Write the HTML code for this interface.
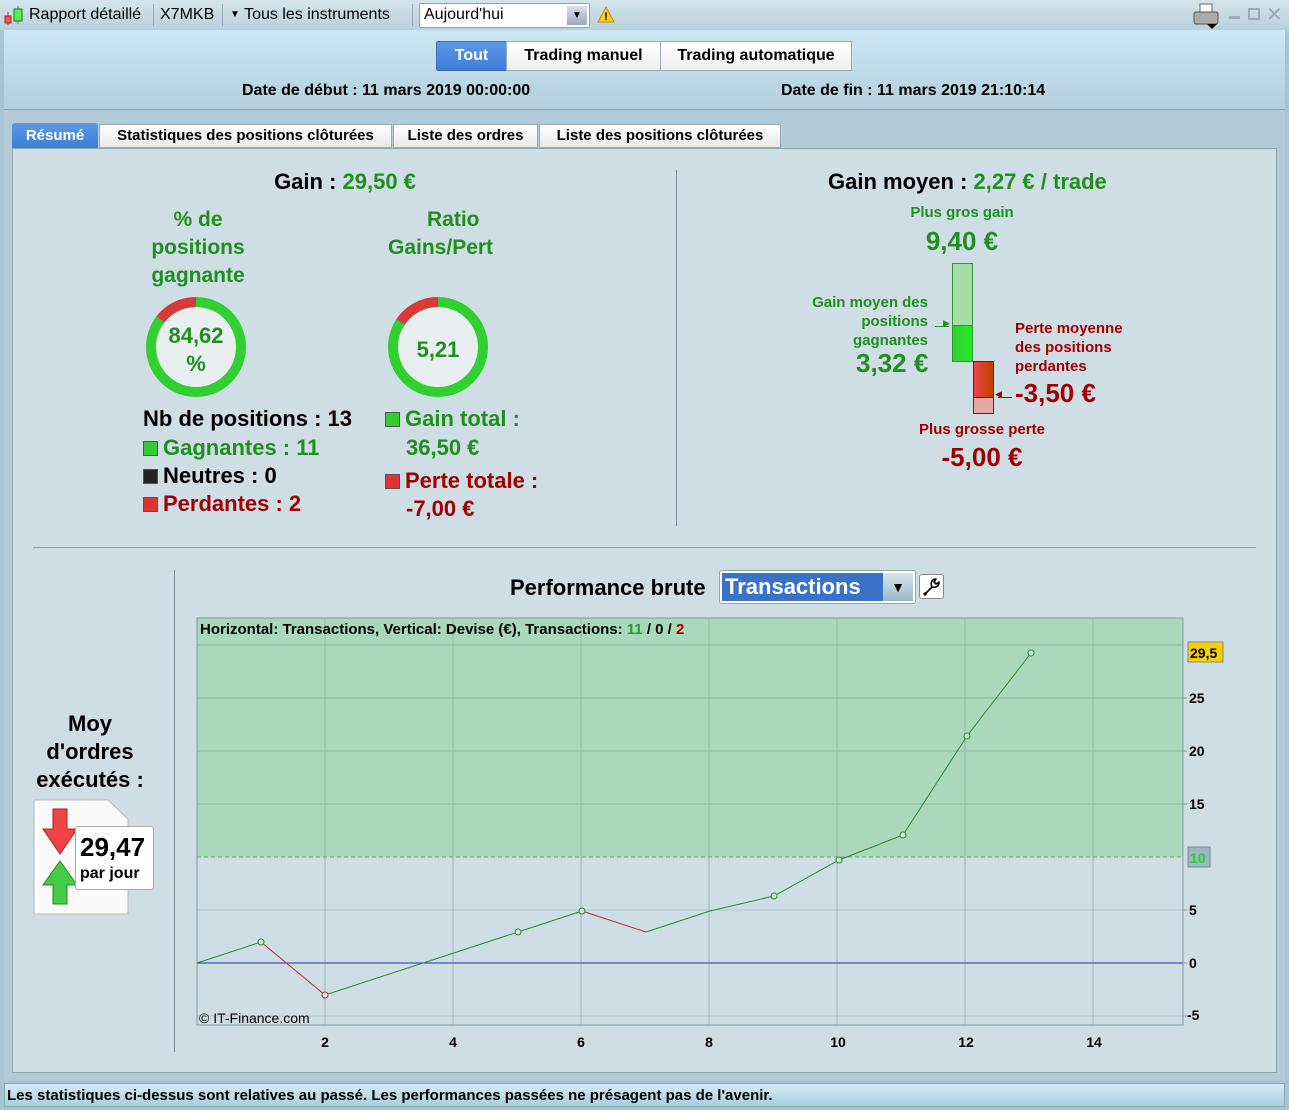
<!DOCTYPE html>
<html><head><meta charset="utf-8">
<style>
*{margin:0;padding:0;box-sizing:border-box}
body{width:1289px;height:1110px;position:relative;overflow:hidden;background:#a8c4d2;font-family:"Liberation Sans",Arial,sans-serif;color:#000}
.a{position:absolute;white-space:nowrap}
.b{font-weight:bold}
.g{color:#1f8f1f}
.r{color:#a00000}
.c{text-align:center}
.sq{display:inline-block;width:15px;height:15px;border:1px solid #555;vertical-align:-1px;margin-right:5px}
</style></head><body>
<div class="a" style="left:0;top:0;width:1289px;height:30px;background:linear-gradient(#d4e4ec,#b8d0dc)"></div>
<svg class="a" style="left:3px;top:6px" width="24" height="20"><line x1="5" y1="6" x2="5" y2="19" stroke="#c33"/><rect x="2" y="10" width="6" height="7" fill="#e55" stroke="#a22"/><line x1="15" y1="0" x2="15" y2="18" stroke="#2a2"/><rect x="11" y="3" width="8" height="12" fill="#5e5" stroke="#272"/></svg>
<div class="a" style="left:29px;top:6px;font-size:16px">Rapport détaillé</div>
<div class="a" style="left:153px;top:4px;width:1px;height:22px;background:#9ab"></div>
<div class="a" style="left:160px;top:6px;font-size:16px">X7MKB</div>
<div class="a" style="left:222px;top:4px;width:1px;height:22px;background:#9ab"></div>
<div class="a" style="left:230px;top:6px;font-size:16px"><span style="font-size:10px;vertical-align:2px">▼</span> Tous les instruments</div>
<div class="a" style="left:412px;top:4px;width:1px;height:22px;background:#9ab"></div>
<div class="a" style="left:419px;top:3px;width:171px;height:25px;background:#fff;border:1px solid #8aa;border-radius:2px"></div>
<div class="a" style="left:424px;top:6px;font-size:16px">Aujourd'hui</div>
<div class="a" style="left:567px;top:6px;width:20px;height:19px;background:linear-gradient(#dde,#9ab);font-size:10px;text-align:center;line-height:19px">▼</div>
<svg class="a" style="left:597px;top:6px" width="18" height="17"><polygon points="9,1 17,16 1,16" fill="#fc2" stroke="#c80"/><text x="9" y="14" font-size="11" font-weight="bold" text-anchor="middle" font-family="Liberation Sans">!</text></svg>
<svg class="a" style="left:1192px;top:3px" width="30" height="26"><rect x="8" y="1" width="12" height="9" fill="#fff" stroke="#666"/><rect x="2" y="9" width="24" height="12" rx="2" fill="#aaa" stroke="#555"/><polygon points="15,21 25,21 20,26" fill="#000"/></svg>
<div class="a" style="left:1229px;top:16px;width:11px;height:3px;background:#9ab"></div>
<div class="a" style="left:1248px;top:8px;width:12px;height:12px;border:2px solid #9ab"></div>
<div class="a" style="left:1266px;top:2px;font-size:20px;color:#9ab">✕</div>
<div class="a" style="left:4px;top:30px;width:1281px;height:80px;background:linear-gradient(#cbe8f4,#b3cfdc);border-bottom:1px solid #8aa"></div>
<div class="a c b" style="left:436px;top:41px;width:71px;height:30px;background:linear-gradient(#5b9ae6,#3e7ed6);color:#fff;border:1px solid #3a6fb8;line-height:28px;font-size:16px;border-radius:2px 0 0 2px">Tout</div>
<div class="a c b" style="left:506px;top:41px;width:155px;height:30px;background:linear-gradient(#fff,#eee);border:1px solid #9ab;line-height:28px;font-size:16px">Trading manuel</div>
<div class="a c b" style="left:660px;top:41px;width:192px;height:30px;background:linear-gradient(#fff,#eee);border:1px solid #9ab;line-height:28px;font-size:16px">Trading automatique</div>
<div class="a b" style="left:242px;top:82px;font-size:16px">Date de début : 11 mars 2019 00:00:00</div>
<div class="a b" style="left:781px;top:82px;font-size:16px">Date de fin : 11 mars 2019 21:10:14</div>
<div class="a" style="left:4px;top:111px;width:1281px;height:970px;background:#b3cbd7"></div>
<div class="a c b" style="left:12px;top:123px;width:86px;height:25px;background:linear-gradient(#5b9ae6,#3e7ed6);color:#fff;font-size:15px;line-height:25px;border-radius:3px 3px 0 0">Résumé</div>
<div class="a c b" style="left:99px;top:124px;width:293px;height:24px;background:linear-gradient(#fff,#e8e8e8);border:1px solid #9ab;font-size:15px;line-height:22px">Statistiques des positions clôturées</div>
<div class="a c b" style="left:393px;top:124px;width:145px;height:24px;background:linear-gradient(#fff,#e8e8e8);border:1px solid #9ab;font-size:15px;line-height:22px">Liste des ordres</div>
<div class="a c b" style="left:539px;top:124px;width:242px;height:24px;background:linear-gradient(#fff,#e8e8e8);border:1px solid #9ab;font-size:15px;line-height:22px">Liste des positions clôturées</div>
<div class="a" style="left:12px;top:148px;width:1265px;height:925px;background:#cfdde4;border:1px solid #8aa"></div>
<div class="a c b" style="left:200px;top:169px;width:290px;font-size:22px">Gain : <span class="g">29,50 €</span></div>
<div class="a c b g" style="left:118px;top:206px;width:160px;font-size:21px;line-height:28px;white-space:normal">% de<br>positions<br>gagnante</div>
<div class="a b g" style="left:427px;top:206px;font-size:21px;line-height:28px">Ratio</div>
<div class="a b g" style="left:388px;top:234px;width:105px;overflow:hidden;font-size:21px;line-height:28px">Gains/Pertes</div>
<svg class="a" style="left:144px;top:295px" width="104" height="104"><circle cx="52" cy="52" r="45" fill="#e9eef0" stroke="#2fd02f" stroke-width="10"/><path d="M52 7 A45 45 0 0 0 16.5 24.3" fill="none" stroke="#d83a3a" stroke-width="10"/></svg>
<div class="a c b g" style="left:156px;top:322px;width:80px;font-size:22px;line-height:28px">84,62<br>%</div>
<svg class="a" style="left:386px;top:295px" width="104" height="104"><circle cx="52" cy="52" r="45" fill="#e9eef0" stroke="#2fd02f" stroke-width="10"/><path d="M52 7 A45 45 0 0 0 14.5 27" fill="none" stroke="#d83a3a" stroke-width="10"/></svg>
<div class="a c b g" style="left:398px;top:337px;width:80px;font-size:22px">5,21</div>
<div class="a b" style="left:143px;top:406px;font-size:22px">Nb de positions : 13</div>
<div class="a b g" style="left:143px;top:435px;font-size:22px"><span class="sq" style="background:#3c3"></span>Gagnantes : 11</div>
<div class="a b" style="left:143px;top:463px;font-size:22px"><span class="sq" style="background:#222"></span>Neutres : 0</div>
<div class="a b r" style="left:143px;top:491px;font-size:22px"><span class="sq" style="background:#d33"></span>Perdantes : 2</div>
<div class="a b g" style="left:385px;top:406px;font-size:22px"><span class="sq" style="background:#3c3"></span>Gain total :</div>
<div class="a b g" style="left:406px;top:435px;font-size:22px">36,50 €</div>
<div class="a b r" style="left:385px;top:468px;font-size:22px"><span class="sq" style="background:#d33"></span>Perte totale :</div>
<div class="a b r" style="left:406px;top:496px;font-size:22px">-7,00 €</div>
<div class="a" style="left:676px;top:170px;width:1px;height:356px;background:#7a8e98"></div>
<div class="a b" style="left:828px;top:169px;font-size:22px">Gain moyen : <span class="g">2,27 € / trade</span></div>
<div class="a c b g" style="left:880px;top:204px;width:164px;font-size:15px">Plus gros gain</div>
<div class="a c b g" style="left:880px;top:226px;width:164px;font-size:26px">9,40 €</div>
<div class="a" style="left:952px;top:263px;width:21px;height:63px;background:#a6dca6;border:1px solid #2a9a2a"></div>
<div class="a" style="left:952px;top:325px;width:21px;height:37px;background:linear-gradient(90deg,#3c3,#2e2);border:1px solid #2a9a2a"></div>
<div class="a" style="left:973px;top:361px;width:21px;height:37px;background:linear-gradient(90deg,#e44,#b40);border:1px solid #a00"></div>
<div class="a" style="left:973px;top:397px;width:21px;height:17px;background:#e8a8a8;border:1px solid #a00"></div>
<div class="a b g" style="left:760px;top:293px;width:168px;font-size:15px;text-align:right;line-height:19px">Gain moyen des<br>positions<br>gagnantes</div>
<div class="a b g" style="left:856px;top:348px;font-size:26px">3,32 €</div>
<div class="a" style="left:935px;top:326px;width:14px;height:1px;background:#2a8a2a"></div>
<div class="a g" style="left:943px;top:318px;font-size:9px">▶</div>
<div class="a b r" style="left:1015px;top:319px;font-size:15px;line-height:19px">Perte moyenne<br>des positions<br>perdantes</div>
<div class="a" style="left:998px;top:397px;width:14px;height:1px;background:#a00"></div>
<div class="a r" style="left:995px;top:389px;font-size:9px">◀</div>
<div class="a b r" style="left:1015px;top:378px;font-size:26px">-3,50 €</div>
<div class="a c b r" style="left:900px;top:421px;width:164px;font-size:15px">Plus grosse perte</div>
<div class="a c b r" style="left:900px;top:442px;width:164px;font-size:26px">-5,00 €</div>
<div class="a" style="left:33px;top:547px;width:1223px;height:1px;background:#8a9ea8"></div>
<div class="a" style="left:174px;top:570px;width:1px;height:482px;background:#7a8e98"></div>
<div class="a c b" style="left:20px;top:710px;width:140px;font-size:22px;line-height:28px">Moy<br>d'ordres<br>exécutés :</div>
<svg class="a" style="left:33px;top:799px" width="100" height="116"><path d="M1 1 H75 L95 20 V115 H1 Z" fill="#fafafa" stroke="#bbb"/><polygon points="20,10 34,10 34,30 44,30 27,55 10,30 20,30" fill="#e44" stroke="#a22"/><polygon points="27,62 44,86 34,86 34,105 20,105 20,86 10,86" fill="#4c4" stroke="#282"/></svg>
<div class="a" style="left:75px;top:826px;width:79px;height:64px;background:#fff;border:1px solid #aaa;border-radius:3px"></div>
<div class="a b" style="left:80px;top:832px;font-size:26px">29,47</div>
<div class="a b" style="left:80px;top:865px;font-size:16px">par jour</div>
<div class="a b" style="left:510px;top:575px;font-size:22px">Performance brute</div>
<div class="a" style="left:719px;top:570px;width:197px;height:34px;background:#fff;border:1px solid #8aa;border-radius:3px"></div>
<div class="a b" style="left:722px;top:573px;width:161px;height:28px;background:#3a72c8;color:#fff;font-size:22px;line-height:28px;padding-left:3px">Transactions</div>
<div class="a" style="left:883px;top:573px;width:30px;height:28px;background:linear-gradient(#d8e6ee,#9cb8c8);font-size:14px;text-align:center;line-height:28px">▼</div>
<div class="a" style="left:919px;top:574px;width:25px;height:25px;background:#fff;border:1px solid #888;border-radius:3px"></div>
<svg class="a" style="left:921px;top:576px" width="21" height="21"><path d="M4 18 L11 11 M11 11 C9 7 11 3 15 3 L13 6 L15 8 L18 6 C18 10 15 12 11 11" fill="none" stroke="#000" stroke-width="1.6" stroke-linejoin="round"/><path d="M3 17 L5 19" stroke="#000" stroke-width="3"/></svg>
<svg class="a" style="left:0;top:0" width="1289" height="1080" font-family="Liberation Sans" font-weight="bold">
<rect x="197" y="618" width="986" height="239" fill="#a9d9ba"/>
<g stroke="#8fb4a0" stroke-width="1">
<line x1="197" y1="645" x2="1183" y2="645"/><line x1="197" y1="698" x2="1183" y2="698"/><line x1="197" y1="751" x2="1183" y2="751"/><line x1="197" y1="804" x2="1183" y2="804"/>
</g>
<g stroke="#b4c4cc" stroke-width="1">
<line x1="197" y1="910" x2="1183" y2="910"/><line x1="197" y1="1016" x2="1183" y2="1016"/>
</g>
<g stroke="#9ab8b0" stroke-width="1">
<line x1="325" y1="618" x2="325" y2="1025"/><line x1="453" y1="618" x2="453" y2="1025"/><line x1="581" y1="618" x2="581" y2="1025"/><line x1="709" y1="618" x2="709" y2="1025"/><line x1="837" y1="618" x2="837" y2="1025"/><line x1="965" y1="618" x2="965" y2="1025"/><line x1="1093" y1="618" x2="1093" y2="1025"/>
</g>
<line x1="197" y1="857" x2="1183" y2="857" stroke="#6a9a7a" stroke-dasharray="4,3"/>
<line x1="197" y1="963" x2="1183" y2="963" stroke="#2030c0"/>
<rect x="197" y="618" width="986" height="407" fill="none" stroke="#7a9aa4"/>
<polyline points="197,963 261,942" fill="none" stroke="#2a8a2a"/>
<polyline points="261,942 325,995" fill="none" stroke="#b03030"/>
<polyline points="325,995 518,932 582,911" fill="none" stroke="#2a8a2a"/>
<polyline points="582,911 646,932" fill="none" stroke="#b03030"/>
<polyline points="646,932 710,911 774,896 839,860 903,835 967,736 1031,653" fill="none" stroke="#2a8a2a"/>
<g fill="#cfe8d8" stroke="#2a8a2a"><circle cx="261" cy="942" r="3"/><circle cx="518" cy="932" r="3"/><circle cx="582" cy="911" r="3"/><circle cx="774" cy="896" r="3"/><circle cx="839" cy="860" r="3"/><circle cx="903" cy="835" r="3"/><circle cx="967" cy="736" r="3"/><circle cx="1031" cy="653" r="3"/></g>
<circle cx="325" cy="995" r="3" fill="#eee" stroke="#b03030"/>
<g font-size="14" fill="#000">
<text x="200" y="634" font-size="15">Horizontal: Transactions, Vertical: Devise (€), Transactions: <tspan fill="#2a9a2a">11</tspan> / 0 / <tspan fill="#a00000">2</tspan></text>
<text x="1189" y="703">25</text><text x="1189" y="756">20</text><text x="1189" y="809">15</text><text x="1189" y="915">5</text><text x="1189" y="968">0</text><text x="1187" y="1020">-5</text>
<text x="325" y="1047" text-anchor="middle">2</text><text x="453" y="1047" text-anchor="middle">4</text><text x="581" y="1047" text-anchor="middle">6</text><text x="709" y="1047" text-anchor="middle">8</text><text x="838" y="1047" text-anchor="middle">10</text><text x="966" y="1047" text-anchor="middle">12</text><text x="1094" y="1047" text-anchor="middle">14</text>
</g>
<g stroke="#7a9aa4"><line x1="1183" y1="698" x2="1187" y2="698"/><line x1="1183" y1="751" x2="1187" y2="751"/><line x1="1183" y1="804" x2="1187" y2="804"/><line x1="1183" y1="910" x2="1187" y2="910"/><line x1="1183" y1="963" x2="1187" y2="963"/><line x1="1183" y1="1016" x2="1187" y2="1016"/></g>
<rect x="1188" y="642" width="35" height="20" fill="#f5d000" stroke="#888"/>
<text x="1190" y="658" font-size="14">29,5</text>
<rect x="1188" y="847" width="22" height="20" fill="#9ab8c0" stroke="#789"/>
<text x="1190" y="863" font-size="14" fill="#3c3">10</text>
<text x="199" y="1023" font-size="14" font-weight="normal">© IT-Finance.com</text>
</svg>
<div class="a" style="left:4px;top:1083px;width:1281px;height:24px;background:linear-gradient(#d4ecf6,#a8cedc);border:1px solid #8aa"></div>
<div class="a b" style="left:7px;top:1087px;font-size:15px">Les statistiques ci-dessus sont relatives au passé. Les performances passées ne présagent pas de l'avenir.</div>
</body></html>
